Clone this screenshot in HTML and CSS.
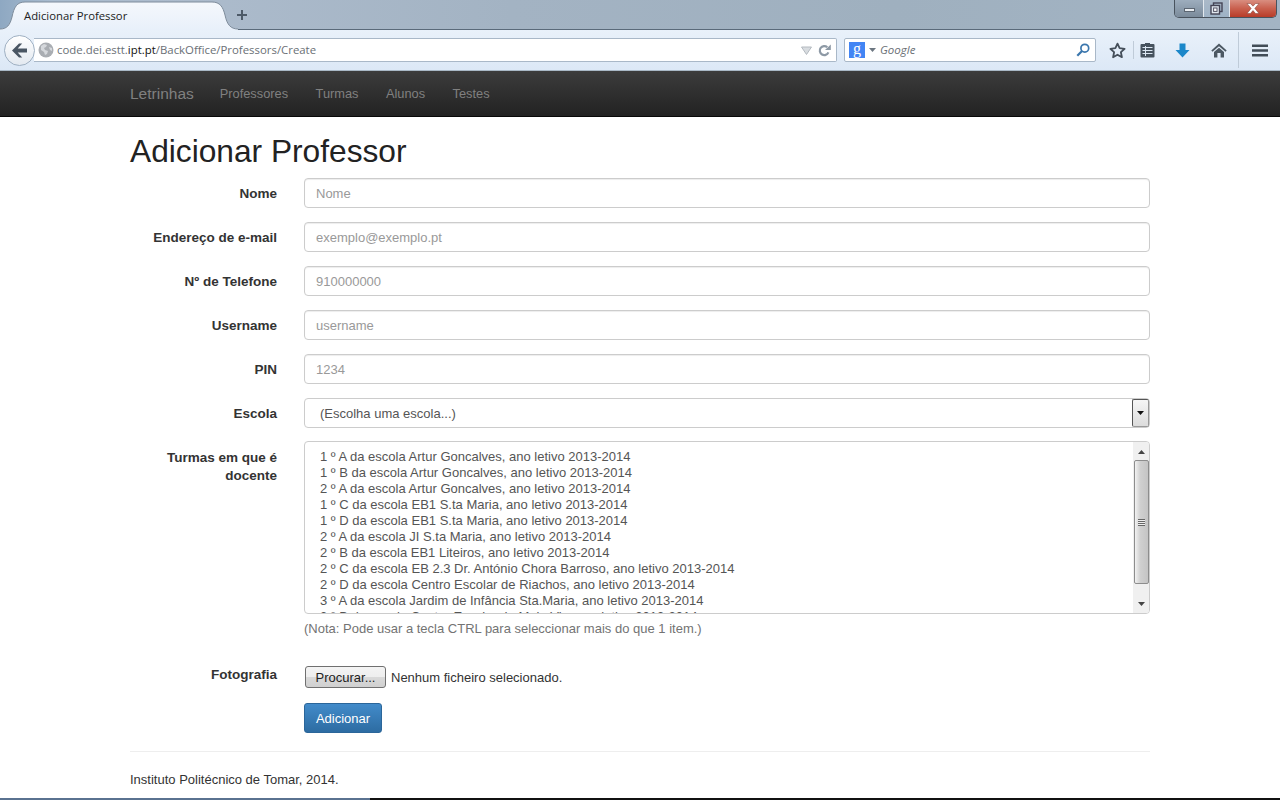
FILE: index.html
```html
<!DOCTYPE html>
<html lang="pt">
<head>
    <meta charset="UTF-8">
    <meta name="viewport" content="width=device-width, initial-scale=1.0">
    <title>Adicionar Professor</title>
    <link rel="stylesheet" href="styles.css">
</head>
<body>
    <div class="browser">
        <div class="tabbar">
            <div class="tab">
                <svg class="tab-shape" width="238" height="29" viewBox="0 0 238 29">
                    <defs><linearGradient id="tabfill" x1="0" y1="0" x2="0" y2="1"><stop offset="0" stop-color="#f5f8fc"/><stop offset="1" stop-color="#e8f0fa"/></linearGradient></defs>
                    <path d="M0 29V28C7 28 10 24 12 16 14 6 17 1 25 1H212C220 1 223 6 225 14 227 24 231 28 238 28V29z" fill="url(#tabfill)"/>
                    <path d="M0 28C7 28 10 24 12 16 14 6 17 1 25 1H212C220 1 223 6 225 14 227 24 231 28 238 28" fill="none" stroke="#7e8c9b"/>
                </svg>
                <span class="tab-title">Adicionar Professor</span>
            </div>
            <svg class="new-tab" width="12" height="12" viewBox="0 0 12 12"><path d="M5 1h2v4h4v2H7v4H5V7H1V5h4z" fill="#4d5a68"/></svg>
            <div class="win-buttons">
                <div class="win-btn win-min"><span class="min-bar"></span></div>
                <div class="win-btn win-max">
                    <svg width="13" height="13" viewBox="0 0 13 13"><rect x="3.5" y="1" width="8.5" height="8.5" fill="none" stroke="#445" stroke-width="1.4"/><rect x="1" y="3.5" width="8.5" height="8.5" fill="#dfe6ee" stroke="#445" stroke-width="1.4"/><rect x="3.6" y="6" width="3.4" height="3.4" fill="#fff" stroke="#556" stroke-width="1"/></svg>
                </div>
                <div class="win-btn win-close">
                    <svg width="14" height="11" viewBox="0 0 14 11"><path d="M1 0.5h3.4L7 3.2 9.6 0.5H13L8.8 5.4 13 10.5H9.6L7 7.6 4.4 10.5H1L5.2 5.4z" fill="#fff" stroke="#7c3a30" stroke-width=".5"/></svg>
                </div>
            </div>
        </div>
        <div class="toolbar">
            <div class="back-btn">
                <svg width="17" height="15" viewBox="0 0 17 15"><path d="M8 0.5L1 7.5l7 7h3.2L6.7 9.6H16V5.4H6.7L11.2 0.5z" fill="#4a5663"/></svg>
            </div>
            <div class="urlbar">
                <svg class="globe" width="16" height="16" viewBox="0 0 16 16"><circle cx="8" cy="8" r="7.5" fill="#a9adb2"/><path d="M3 4l3-2 3 1-1 2-2 1 1 2 3 1-1 3-2 1-1-3-3-2zM11 5l3 1 0 3-2-1z" fill="#d5d8dc"/></svg>
                <span class="url">code.dei.estt.<b>ipt.pt</b>/BackOffice/Professors/Create</span>
                <svg class="url-drop" width="11" height="9" viewBox="0 0 11 9"><path d="M0.5 1h10L5.5 8.5z" fill="#d8dce0" stroke="#b4bac0"/></svg>
                <svg class="reload" width="13" height="13" viewBox="0 0 13 13"><path d="M10.4 8.4A4.5 4.5 0 1 1 9.3 3.2" fill="none" stroke="#8d99a5" stroke-width="2.2"/><path d="M7 6h5.8V0.5z" fill="#8d99a5"/></svg>
            </div>
            <div class="searchbar">
                <div class="g-logo">g</div>
                <svg width="7" height="4" viewBox="0 0 7 4"><path d="M0 0h7L3.5 4z" fill="#6c7680"/></svg>
                <span class="search-text">Google</span>
                <svg class="search-icon" width="14" height="14" viewBox="0 0 14 14"><circle cx="8.8" cy="5.2" r="3.9" fill="#fff" stroke="#3a76ad" stroke-width="1.7"/><path d="M6 8L1.3 12.7" stroke="#3a76ad" stroke-width="2.2"/></svg>
            </div>
            <div class="tool-icons">
                <svg class="ti-star" width="17" height="17" viewBox="0 0 17 17"><path d="M8.5 1.6l2.1 4.6 5 .6-3.7 3.4 1 5-4.4-2.5-4.4 2.5 1-5L1.4 6.8l5-.6z" fill="none" stroke="#454f5a" stroke-width="1.8" stroke-linejoin="round"/></svg>
                <span class="ti-sep"></span>
                <svg class="ti-list" width="15" height="16" viewBox="0 0 15 16"><path d="M5 2V1h5v1h3.5a1 1 0 0 1 1 1v11.5a1 1 0 0 1-1 1h-12a1 1 0 0 1-1-1V3a1 1 0 0 1 1-1z" fill="#46525e"/><path d="M2.5 5.5h10M2.5 8.5h10M2.5 11.5h10M5.5 4v10" stroke="#dbe6f2" stroke-width="1"/></svg>
                <svg class="ti-down" width="15" height="15" viewBox="0 0 15 15"><path d="M4.5 0.5h6v6.5h4L7.5 14.5.5 7h4z" fill="#1b87c9"/></svg>
                <svg class="ti-home" width="16" height="15" viewBox="0 0 16 15"><path d="M8 0.5L0.3 7.6l1.2 1.2L8 3.3l6.5 5.5 1.2-1.2z" fill="#4c5863"/><path d="M3 9l5-4.2L13 9v5.5H9.6V10H6.4v4.5H3z" fill="#4c5863"/></svg>
                <span class="ti-sep ti-sep-tall"></span>
                <svg class="ti-menu" width="16" height="13" viewBox="0 0 16 13"><path d="M0 0.5h16v2.4H0zM0 5.3h16v2.4H0zM0 10.1h16v2.4H0z" fill="#414c57"/></svg>
            </div>
        </div>
    </div>

    <nav class="navbar">
        <div class="container nav-inner">
            <a class="brand" href="#">Letrinhas</a>
            <a class="nav-link" href="#">Professores</a>
            <a class="nav-link" href="#">Turmas</a>
            <a class="nav-link" href="#">Alunos</a>
            <a class="nav-link" href="#">Testes</a>
        </div>
    </nav>

    <div class="container">
        <h1>Adicionar Professor</h1>
        <form class="form">
            <div class="form-row">
                <label class="form-label">Nome</label>
                <input class="form-input" type="text" placeholder="Nome">
            </div>
            <div class="form-row">
                <label class="form-label">Endereço de e-mail</label>
                <input class="form-input" type="text" placeholder="exemplo@exemplo.pt">
            </div>
            <div class="form-row">
                <label class="form-label">Nº de Telefone</label>
                <input class="form-input" type="text" placeholder="910000000">
            </div>
            <div class="form-row">
                <label class="form-label">Username</label>
                <input class="form-input" type="text" placeholder="username">
            </div>
            <div class="form-row">
                <label class="form-label">PIN</label>
                <input class="form-input" type="text" placeholder="1234">
            </div>
            <div class="form-row form-row-select">
                <label class="form-label">Escola</label>
                <div class="select-box">
                    <span>(Escolha uma escola...)</span>
                    <div class="select-arrow"><svg width="7" height="4" viewBox="0 0 7 4"><path d="M0 0h7L3.5 4z" fill="#111"/></svg></div>
                </div>
            </div>
            <div class="form-row form-row-list">
                <label class="form-label">Turmas em que é docente</label>
                <div class="field-col">
                    <div class="listbox">
                        <div class="list-items">
                            <div>1 º A da escola Artur Goncalves, ano letivo 2013-2014</div>
                            <div>1 º B da escola Artur Goncalves, ano letivo 2013-2014</div>
                            <div>2 º A da escola Artur Goncalves, ano letivo 2013-2014</div>
                            <div>1 º C da escola EB1 S.ta Maria, ano letivo 2013-2014</div>
                            <div>1 º D da escola EB1 S.ta Maria, ano letivo 2013-2014</div>
                            <div>2 º A da escola JI S.ta Maria, ano letivo 2013-2014</div>
                            <div>2 º B da escola EB1 Liteiros, ano letivo 2013-2014</div>
                            <div>2 º C da escola EB 2.3 Dr. António Chora Barroso, ano letivo 2013-2014</div>
                            <div>2 º D da escola Centro Escolar de Riachos, ano letivo 2013-2014</div>
                            <div>3 º A da escola Jardim de Infância Sta.Maria, ano letivo 2013-2014</div>
                            <div>3 º B da escola Centro Escolar de Meia Via, ano letivo 2013-2014</div>
                        </div>
                        <div class="scrollbar">
                            <svg class="scroll-arrow scroll-up" width="7" height="4" viewBox="0 0 7 4"><path d="M0 4h7L3.5 0z" fill="#444"/></svg>
                            <div class="scroll-thumb"><span class="grip"></span></div>
                            <svg class="scroll-arrow scroll-down" width="7" height="4" viewBox="0 0 7 4"><path d="M0 0h7L3.5 4z" fill="#444"/></svg>
                        </div>
                    </div>
                    <p class="help">(Nota: Pode usar a tecla CTRL para seleccionar mais do que 1 item.)</p>
                </div>
            </div>
            <div class="form-row form-row-file">
                <label class="form-label">Fotografia</label>
                <div class="file-field">
                    <button type="button" class="file-btn">Procurar...</button>
                    <span class="file-name">Nenhum ficheiro selecionado.</span>
                </div>
            </div>
            <div class="form-row form-row-submit">
                <span class="form-label"></span>
                <button type="submit" class="btn-primary">Adicionar</button>
            </div>
        </form>
        <hr class="divider">
        <footer class="footer">Instituto Politécnico de Tomar, 2014.</footer>
    </div>
    <div class="taskbar-edge"></div>
</body>
</html>
```

FILE: styles.css
```css
* {
    box-sizing: border-box;
}
html, body {
    height: 800px;
    overflow: hidden;
}
body {
    margin: 0;
    font-family: "Liberation Sans", Arial, sans-serif;
    font-size: 14px;
    line-height: 20px;
    color: #333;
    background: #fff;
    position: relative;
}
.browser {
    height: 71px;
    font-family: "Open Sans", "Noto Sans", sans-serif;
}
.tabbar {
    height: 30px;
    display: flex;
    align-items: flex-start;
    background: linear-gradient(90deg, #8ea8c2 0%, #a9bccf 4%, #adbccd 12%, #a3b3c3 40%, #9fb0bf 70%, #a3b4c4 100%);
    border-bottom: 1px solid #5a6a7a;
}
.tab {
    width: 238px;
    height: 29px;
    margin-top: 1px;
    position: relative;
    padding: 6px 0 0 24px;
    font-size: 11.3px;
    line-height: 18px;
    color: #222;
}
.tab-shape {
    position: absolute;
    left: 0;
    top: 0;
}
.tab-title {
    position: relative;
}
.new-tab {
    margin: 9px 0 0 -2px;
}
.win-buttons {
    margin-left: auto;
    margin-right: 3px;
    width: 103px;
    height: 18px;
    display: flex;
    border: 1px solid #49535e;
    border-top: 0;
    border-radius: 0 0 5px 5px;
    overflow: hidden;
}
.win-btn {
    display: flex;
    align-items: center;
    justify-content: center;
}
.win-min {
    width: 29px;
    background: linear-gradient(#9dadbd, #7b8b9b);
    border-right: 1px solid #e2e8ee;
}
.min-bar {
    width: 11px;
    height: 4px;
    margin-top: 2px;
    background: #e9edf1;
    border: 1px solid #5c6672;
}
.win-max {
    width: 26px;
    background: linear-gradient(#aab9c8, #9fb3c6);
    border-right: 1px solid #e2e8ee;
}
.win-close {
    flex: 1;
    background: linear-gradient(#d98e80 0%, #c9604e 50%, #b83c28 100%);
}
.toolbar {
    height: 41px;
    display: flex;
    align-items: center;
    padding-left: 4px;
    background: linear-gradient(#e9f1fa, #dce8f6);
    border-bottom: 1px solid #a9b8c6;
}
.back-btn {
    width: 31px;
    height: 31px;
    border-radius: 50%;
    border: 1px solid #9fb0c2;
    background: linear-gradient(#ffffff, #e3e9f0);
    display: flex;
    align-items: center;
    justify-content: center;
    position: relative;
    z-index: 1;
}
.urlbar {
    width: 803px;
    height: 24px;
    margin-left: -1px;
    display: flex;
    align-items: center;
    padding: 0 5px 0 4px;
    background: #fff;
    border: 1px solid #a9b8c8;
    border-left: 0;
    border-radius: 0 2px 2px 0;
}
.url {
    margin-left: 3px;
    font-size: 11.4px;
    color: #6a6f75;
}
.url b {
    font-weight: 400;
    color: #111;
}
.url-drop {
    margin-left: auto;
}
.reload {
    margin-left: 6px;
}
.searchbar {
    width: 252px;
    height: 24px;
    margin-left: 7px;
    display: flex;
    align-items: center;
    padding: 0 5px 0 4px;
    background: #fff;
    border: 1px solid #a9b8c8;
    border-radius: 2px;
}
.g-logo {
    width: 16px;
    height: 16px;
    margin-right: 4px;
    background: #4285f4;
    color: #fff;
    font-family: "Liberation Serif", serif;
    font-size: 16px;
    line-height: 13px;
    text-align: center;
}
.search-text {
    margin-left: 4px;
    font-size: 11.5px;
    font-style: italic;
    color: #6a6f75;
}
.search-icon {
    margin-left: auto;
}
.tool-icons {
    flex: 1;
    height: 36px;
    display: flex;
    align-items: center;
    padding-left: 13px;
}
.ti-sep {
    width: 1px;
    height: 18px;
    margin: 0 6px 0 7px;
    background: #bfcbd8;
}
.ti-list {
    margin-right: 20px;
}
.ti-down {
    margin-right: 21px;
}
.ti-home {
    margin-right: 4px;
}
.ti-sep-tall {
    height: 36px;
    margin: 0 13px 0 7px;
}
.navbar {
    height: 46px;
    background: linear-gradient(#3c3c3c, #222);
    border-bottom: 1px solid #080808;
}
.container {
    width: 1020px;
    margin-left: 130px;
}
.nav-inner {
    display: flex;
    align-items: center;
    height: 45px;
}
.brand {
    font-size: 15.5px;
    color: #808080;
    text-decoration: none;
    margin-right: 26px;
}
.nav-link {
    color: #808080;
    text-decoration: none;
    margin-right: 27.5px;
    font-size: 12.8px;
}
h1 {
    margin: 15px 0 7px;
    font-size: 31.7px;
    font-weight: 400;
    line-height: 39px;
    color: #222;
}
.form-row {
    display: flex;
    height: 30px;
    margin-bottom: 14px;
}
.form-label {
    width: 147px;
    flex: none;
    margin-right: 27px;
    padding-top: 7px;
    text-align: right;
    font-size: 13.5px;
    line-height: 18px;
    font-weight: 700;
    color: #333;
}
.form-input {
    flex: 1;
    min-width: 0;
    height: 30px;
    padding: 0 11px;
    font: 13px "Liberation Sans", Arial, sans-serif;
    color: #555;
    background: #fff;
    border: 1px solid #ccc;
    border-radius: 4px;
    box-shadow: inset 0 1px 1px rgba(0, 0, 0, .075);
    outline: none;
}
.form-input::placeholder {
    color: #999;
    opacity: 1;
}
.form-row-select {
    margin-bottom: 13px;
}
.select-box {
    flex: 1;
    height: 30px;
    position: relative;
    padding: 5px 15px;
    font-size: 13px;
    color: #555;
    border: 1px solid #ccc;
    border-radius: 4px;
}
.select-arrow {
    position: absolute;
    top: 0;
    right: 0;
    width: 17px;
    height: 28px;
    display: flex;
    align-items: center;
    justify-content: center;
    background: linear-gradient(#f6f6f6, #dcdcdc);
    border: 1px solid #555;
    border-right-color: #999;
    border-bottom-color: #999;
    border-radius: 2px;
}
.form-row-list {
    height: auto;
    margin-bottom: 25px;
}
.form-row-list .form-label {
    padding-top: 8px;
}
.field-col {
    flex: 1;
    min-width: 0;
}
.listbox {
    height: 173px;
    display: flex;
    overflow: hidden;
    border: 1px solid #ccc;
    border-radius: 4px;
}
.list-items {
    flex: 1;
    padding: 7px 15px 0;
    font-size: 13px;
    line-height: 16px;
    color: #555;
    overflow: hidden;
}
.scrollbar {
    width: 16px;
    flex: none;
    display: flex;
    flex-direction: column;
    align-items: center;
    background: #f0f0f0;
}
.scroll-arrow {
    flex: none;
}
.scroll-up {
    margin: 8px 0 6px;
}
.scroll-down {
    margin-top: 18px;
}
.scroll-thumb {
    width: 15px;
    height: 124px;
    flex: none;
    display: flex;
    align-items: center;
    justify-content: center;
    background: linear-gradient(90deg, #f2f2f2, #d0d0d0 40%, #c4c4c4);
    border: 1px solid #8d8d8d;
    border-radius: 2px;
}
.grip {
    width: 7px;
    height: 7px;
    background: repeating-linear-gradient(#666 0 1px, #eee 1px 2px);
}
.help {
    margin: 5px 0 0;
    font-size: 13px;
    color: #737373;
}
.form-row-file {
    height: 24px;
    margin-bottom: 15px;
}
.form-row-file .form-label {
    padding-top: 2px;
}
.file-field {
    display: flex;
    align-items: center;
    gap: 5px;
    height: 24px;
    padding-top: 2px;
    font-size: 13px;
}
.file-name {
    margin-top: 2px;
}
.file-btn {
    width: 81px;
    height: 22px;
    padding: 0;
    margin-left: 1px;
    font: 13px "Liberation Sans", Arial, sans-serif;
    color: #222;
    background: linear-gradient(#f4f4f4 0%, #eee 50%, #d9d9d9 52%, #d0d0d0 100%);
    border: 1px solid #707070;
    border-radius: 3px;
}
.form-row-submit {
    margin-bottom: 18px;
}
.btn-primary {
    width: 78px;
    height: 30px;
    padding: 0;
    font: 13px "Liberation Sans", Arial, sans-serif;
    color: #fff;
    background: linear-gradient(#428bca, #2d6ca2);
    border: 1px solid #2b669a;
    border-radius: 3px;
}
.divider {
    margin: 0;
    border: 0;
    border-top: 1px solid #eee;
}
.footer {
    margin-top: 18px;
    font-size: 13px;
    color: #333;
}
.taskbar-edge {
    position: absolute;
    left: 0;
    right: 0;
    bottom: 0;
    height: 2px;
    background: linear-gradient(90deg, #5a7290 0 370px, #111 370px 100%);
}
```
